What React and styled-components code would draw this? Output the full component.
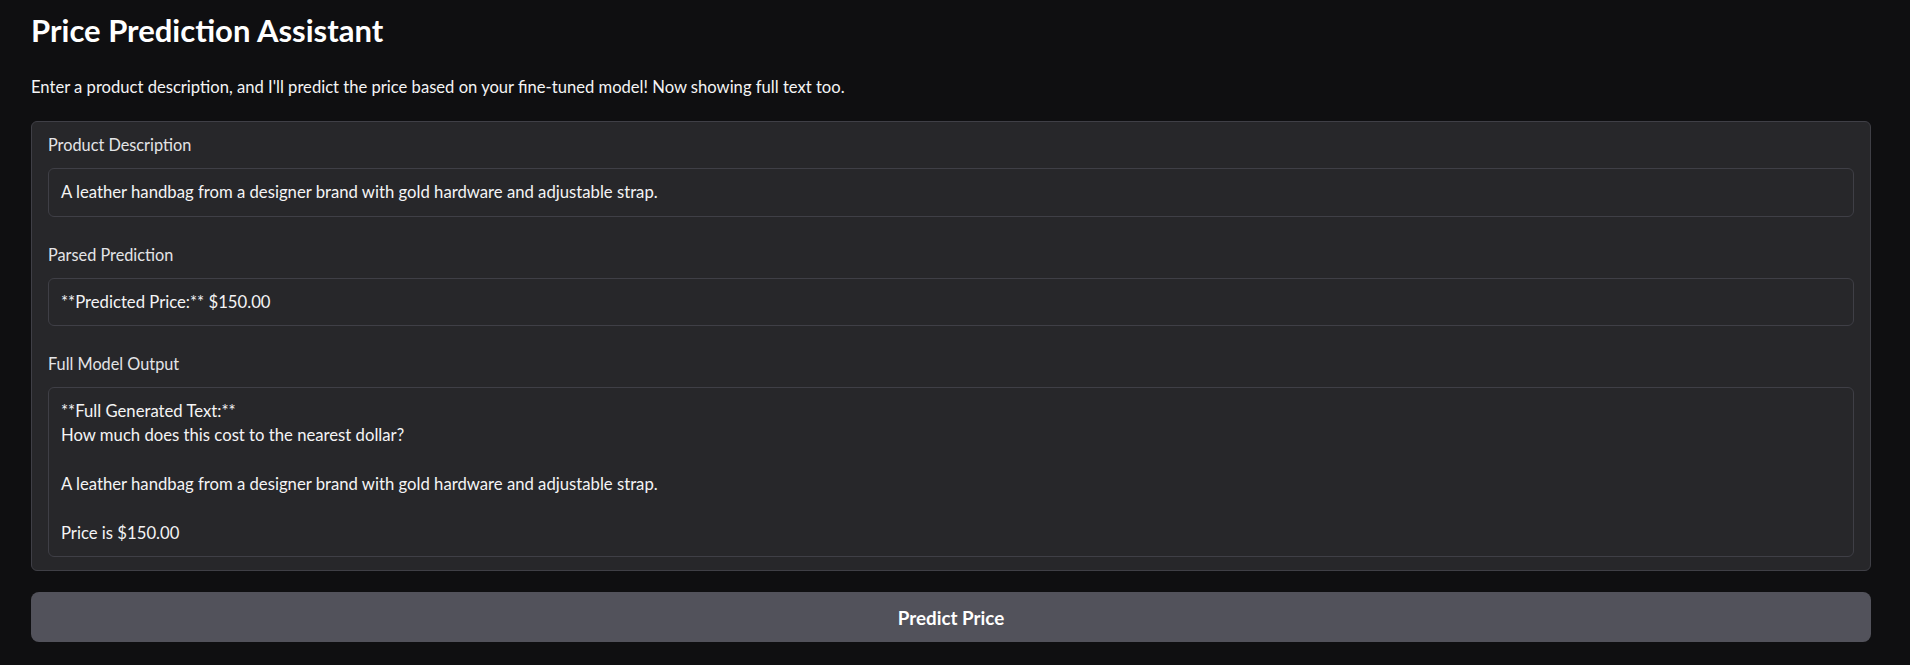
import React from 'react';
import styled, { createGlobalStyle } from 'styled-components';

const GlobalStyle = createGlobalStyle`
    html, body {
        margin: 0;
        padding: 0;
        background: #0f0f11;
    }
    body {
        font-family: Lato, "Noto Sans", "Liberation Sans", sans-serif;
        color: #f4f4f5;
    }
`;

const Page = styled.div`
    padding: 12px 39px 20px 31px;
    display: flex;
    flex-direction: column;
`;

const Title = styled.h1`
    margin: 0;
    font-size: 31px;
    line-height: 36px;
    font-weight: 700;
    color: #ffffff;
`;

const Intro = styled.p`
    margin: 27px 0 22px;
    font-size: 16.6px;
    line-height: 24px;
    color: #f4f4f5;
`;

const Panel = styled.div`
    background: #27272a;
    border: 1px solid #3f3f46;
    border-radius: 6px;
    padding: 12px 16px 13px;
    display: flex;
    flex-direction: column;
    gap: 27px;
`;

const Field = styled.div`
    display: flex;
    flex-direction: column;
    gap: 12px;
`;

const Label = styled.span`
    font-size: 16.3px;
    line-height: 22px;
    color: #e4e4e7;
`;

const TextBox = styled.div`
    border: 1px solid #3f3f46;
    border-radius: 6px;
    background: #27272a;
    padding: ${p => (p.$multi ? '10.5px 12px' : '11px 12px')};
    font-size: 16.7px;
    line-height: 24.5px;
    color: #f4f4f5;
    white-space: pre-wrap;
`;

const Button = styled.button`
    margin-top: 21px;
    height: 50px;
    border: none;
    border-radius: 8px;
    background: #52525b;
    color: #ffffff;
    font-family: inherit;
    font-size: 18.8px;
    font-weight: 700;
    cursor: pointer;
`;

const description = 'A leather handbag from a designer brand with gold hardware and adjustable strap.';

const fullOutput = `**Full Generated Text:**
How much does this cost to the nearest dollar?

${description}

Price is $150.00`;

export default function App() {
    return (
        <>
            <GlobalStyle />
            <Page>
                <Title>Price Prediction Assistant</Title>
                <Intro>
                    Enter a product description, and I'll predict the price based on your fine-tuned model! Now showing full text too.
                </Intro>
                <Panel>
                    <Field>
                        <Label>Product Description</Label>
                        <TextBox>{description}</TextBox>
                    </Field>
                    <Field>
                        <Label>Parsed Prediction</Label>
                        <TextBox>**Predicted Price:** $150.00</TextBox>
                    </Field>
                    <Field>
                        <Label>Full Model Output</Label>
                        <TextBox $multi>{fullOutput}</TextBox>
                    </Field>
                </Panel>
                <Button>Predict Price</Button>
            </Page>
        </>
    );
}
